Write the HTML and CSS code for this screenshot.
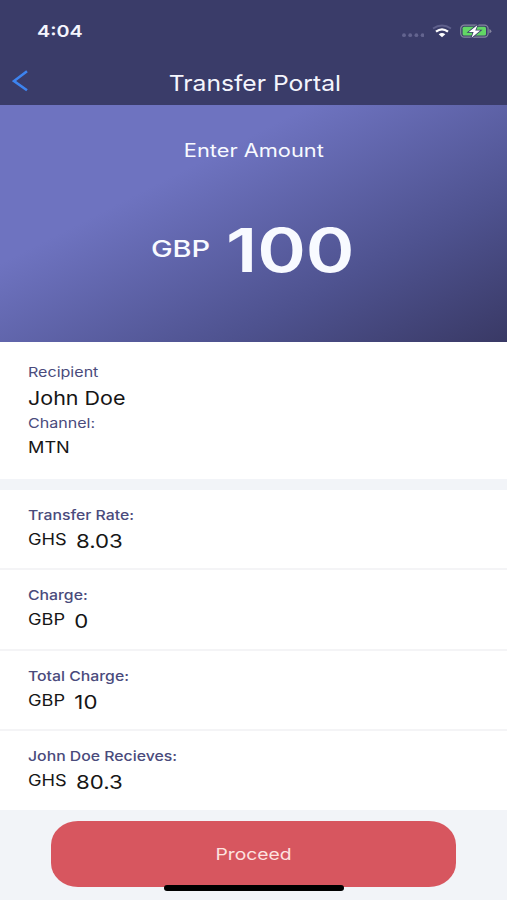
FILE: index.html
```html
<!DOCTYPE html>
<html lang="en">
<head>
<meta charset="utf-8">
<title>Transfer Portal</title>
<link rel="stylesheet" href="styles.css">
</head>
<body>
<main class="screen">
  <header class="header">
    <div class="status">
      <span class="time wide">4:04</span>
      <div class="indicators">
        <svg class="dots" width="24" height="14" viewBox="0 0 24 14"><g fill="#63648f"><circle cx="4" cy="11.2" r="1.9"/><circle cx="10.2" cy="11.2" r="1.9"/><circle cx="16.4" cy="11.2" r="1.9"/><circle cx="22.6" cy="11.2" r="1.9"/></g></svg>
        <svg class="wifi" width="20" height="14" viewBox="0 0 20 14"><g fill="none"><path d="M1 4.6Q10-1.6 19 4.6" stroke="#5f608c" stroke-width="1.8"/><path d="M4 7.7Q10 3.1 16 7.7" stroke="#fff" stroke-width="2.3"/></g><path d="M6.7 10.3Q10 7.9 13.3 10.3L10 13.2Z" fill="#fff"/></svg>
        <svg class="battery" width="32" height="14" viewBox="0 0 32 14"><rect x=".7" y="1.2" width="27.4" height="12" rx="3.6" fill="none" stroke="#85869f" stroke-width="1.2"/><rect x="2.6" y="2.8" width="23.4" height="8.8" rx="1.5" fill="#62d765"/><path d="M29.4 5.1q2 .7 2 2.1t-2 2.1z" fill="#85869f"/><path d="M17.5.9 8.8 8h4.8l-2.1 5.7 8.8-7.2h-5z" fill="#fff" stroke="#3a3c69" stroke-width="1.6" paint-order="stroke"/></svg>
      </div>
    </div>
    <div class="navbar">
      <svg class="back" width="17" height="22" viewBox="0 0 17 22"><path d="M15 1.2 2 11l13 9.2" fill="none" stroke="#3d84f0" stroke-width="2.6"/></svg>
      <h1 class="title"><span class="wide">Transfer Portal</span></h1>
    </div>
  </header>

  <section class="hero">
    <p class="prompt"><span class="wide">Enter Amount</span></p>
    <div class="amount"><span class="currency wide">GBP</span><span class="figure wide">100</span></div>
  </section>

  <section class="recipient">
    <p class="label wide">Recipient</p>
    <p class="name wide">John Doe</p>
    <p class="label wide">Channel:</p>
    <p class="channel wide">MTN</p>
  </section>

  <section class="rates">
    <div class="row"><p class="label strong wide">Transfer Rate:</p><p class="value wide"><span>GHS</span><span class="num">8.03</span></p></div>
    <div class="row"><p class="label strong wide">Charge:</p><p class="value wide"><span>GBP</span><span class="num">0</span></p></div>
    <div class="row"><p class="label strong wide">Total Charge:</p><p class="value wide"><span>GBP</span><span class="num">10</span></p></div>
    <div class="row"><p class="label strong wide">John Doe Recieves:</p><p class="value wide"><span>GHS</span><span class="num">80.3</span></p></div>
  </section>

  <footer class="footer">
    <button class="proceed"><span class="wide">Proceed</span></button>
    <div class="home-bar"></div>
  </footer>
</main>
</body>
</html>
```
FILE: styles.css
```css
* { box-sizing: border-box; }
body { margin: 0; font-family: Inter, "Liberation Sans", sans-serif; color: #161616; }
p, h1 { margin: 0; }
svg { display: block; }
.screen { width: 507px; height: 900px; background: #f2f4f8; overflow: hidden; display: flex; flex-direction: column; }
.wide { display: inline-block; transform: scaleX(1.17); }

.header { height: 105px; background: #3a3c69; color: #f4f5fd; flex: none; }
.status { height: 62px; padding: 0 15px 0 36.5px; display: flex; align-items: center; justify-content: space-between; }
.time { font-size: 16.5px; font-weight: 600; transform-origin: left; transform: scaleX(1.2); }
.indicators { display: flex; align-items: center; gap: 8px; }
.navbar { height: 43px; padding: 0 12px 1px; display: grid; grid-template-columns: 17px 1fr 17px; align-items: center; }
.back { margin-bottom: 4px; }
.title { font-size: 22px; line-height: 30px; font-weight: 400; text-align: center; padding-left: 2px; }
.title .wide { transform: scaleX(1.12); }

.hero { height: 236.5px; flex: none; padding-top: 34px; color: #f8faff; text-align: center; background: linear-gradient(153deg, #6e73c0 0%, #6e73c0 32%, #4e528f 71%, #393965 100%); }
.prompt { font-size: 18px; line-height: 24px; }
.prompt .wide { transform: scaleX(1.21); }
.amount { display: flex; justify-content: center; margin-top: 57px; }
.currency { font-size: 23px; line-height: 24px; font-weight: 500; margin: 17px 34px 0 0; transform: scaleX(1.26); }
.figure { font-size: 60px; line-height: 60px; font-weight: 600; transform: scaleX(1.23); margin-right: 7px; }

.recipient, .rates { background: #fff; flex: none; display: flex; flex-direction: column; }
.recipient { height: 137px; padding: 19.5px 28px 0; align-items: flex-start; }
.recipient .wide, .rates .wide { transform-origin: left; }
.label { font-size: 13.5px; line-height: 22px; color: #4a4b7c; }
.recipient .label { transform: scaleX(1.19); }
.strong { font-weight: 500; }
.recipient .name { font-size: 19px; line-height: 26px; padding-top: 3px; transform: scaleX(1.13); }
.channel { font-size: 15.5px; line-height: 27px; }
.rates { margin-top: 11.5px; }
.row { height: 80.3px; padding: 14px 28px 0; border-bottom: 2px solid #f4f4f6; display: flex; flex-direction: column; align-items: flex-start; }
.row:last-child { border-bottom: 0; height: 79px; }
.value { display: flex; gap: 8px; font-size: 15.5px; line-height: 27px; }
.num { font-size: 19px; padding-top: 2px; }

.footer { display: flex; flex-direction: column; align-items: center; padding-top: 11px; }
.proceed { width: 405px; height: 66px; border: 0; border-radius: 27px / 24px; background: #d7565f; color: #fde3e0; font: 400 16.5px Inter, "Liberation Sans", sans-serif; }
.home-bar { width: 180px; height: 6px; border-radius: 3px; background: #000; margin-top: -2px; position: relative; }
```
